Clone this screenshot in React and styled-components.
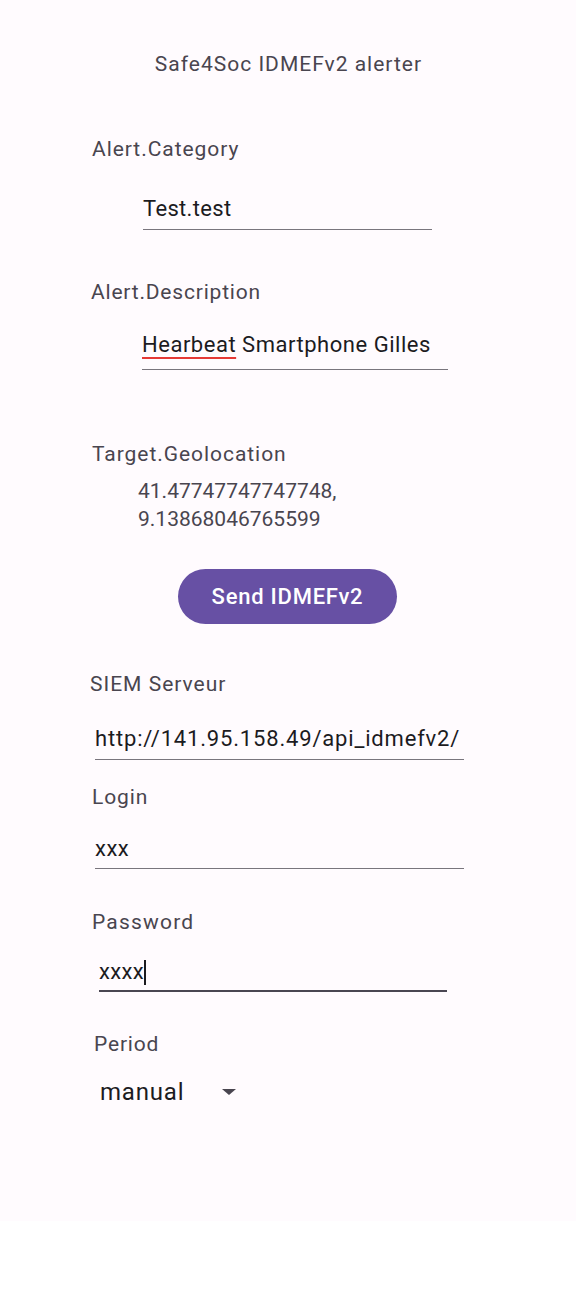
import React from "react";
import styled, { createGlobalStyle } from "styled-components";

const Global = createGlobalStyle`
  html, body { margin: 0; padding: 0; background: #ffffff; }
  body { font-family: Roboto, "Noto Sans", sans-serif; }
`;

const Screen = styled.div`
  width: 576px;
  height: 1221px;
  background: #fffbfe;
  display: flex;
  flex-direction: column;
  box-sizing: border-box;
  padding-top: 50px;
`;

const Title = styled.div`
  text-align: center;
  font-size: 21px;
  line-height: 28px;
  letter-spacing: 1px;
  color: #49454f;
  padding-left: 1px;
`;

const Label = styled.div`
  font-size: 21px;
  line-height: 28px;
  letter-spacing: ${(p) => p.$ls ?? 0.95}px;
  color: #49454f;
  margin-left: ${(p) => p.$x}px;
  margin-top: ${(p) => p.$top}px;
`;

const Field = styled.div`
  margin-left: ${(p) => p.$x}px;
  margin-top: ${(p) => p.$top}px;
  width: ${(p) => p.$w}px;
  border-bottom: ${(p) => (p.$focus ? "2px solid #4a4652" : "1.5px solid #79757d")};
  font-size: 22px;
  line-height: 30px;
  letter-spacing: ${(p) => p.$ls ?? 0.5}px;
  color: #1c1b1f;
  padding-bottom: ${(p) => p.$pb ?? 4}px;
  white-space: nowrap;
  display: flex;
  align-items: center;
`;

const Misspelled = styled.span`
  text-decoration: underline solid #e53935;
  text-decoration-thickness: 2px;
  text-underline-offset: 5px;
`;

const Caret = styled.span`
  display: inline-block;
  width: 2px;
  height: 25px;
  background: #1c1b1f;
  margin-left: 0px;
`;

const Coords = styled.div`
  margin-left: 138px;
  margin-top: 9px;
  font-size: 21px;
  line-height: 28px;
  color: #49454f;
`;

const ButtonRow = styled.div`
  display: flex;
  justify-content: center;
  margin-top: 36px;
  padding-right: 1px;
`;

const Button = styled.button`
  width: 219px;
  height: 55px;
  border: none;
  border-radius: 28px;
  background: #6750a4;
  color: #ffffff;
  font-family: Roboto, sans-serif;
  font-weight: 500;
  font-size: 22px;
  letter-spacing: 0.75px;
  padding: 0;
`;

const Select = styled.div`
  margin-left: 100px;
  margin-top: 19px;
  display: flex;
  align-items: center;
  font-size: 24px;
  line-height: 30px;
  letter-spacing: 0.8px;
  color: #1c1b1f;
`;

const Arrow = styled.span`
  width: 0;
  height: 0;
  border-left: 7px solid transparent;
  border-right: 7px solid transparent;
  border-top: 6px solid #49454f;
  margin-left: 38px;
  margin-top: -1px;
`;

export default function App() {
  return (
    <>
      <Global />
      <Screen>
        <Title>Safe4Soc IDMEFv2 alerter</Title>

        <Label $x={92} $top={57}>Alert.Category</Label>
        <Field $x={143} $top={31} $w={289} $ls={0.33} $pb={5}>Test.test</Field>

        <Label $x={91} $top={48} $ls={0.8}>Alert.Description</Label>
        <Field $x={142} $top={24} $w={306} $pb={9} $ls={0.52}>
          <Misspelled>Hearbeat</Misspelled>&nbsp;Smartphone Gilles
        </Field>

        <Label $x={92} $top={70}>Target.Geolocation</Label>
        <Coords>
          41.47747747747748,
          <br />
          9.13868046765599
        </Coords>

        <ButtonRow>
          <Button>Send IDMEFv2</Button>
        </ButtonRow>

        <Label $x={90} $top={46} $ls={1}>SIEM Serveur</Label>
        <Field $x={95} $top={26} $w={369} $pb={5} $ls={0.82}>http://141.95.158.49/api_idmefv2/</Field>

        <Label $x={92} $top={23} $ls={0.9}>Login</Label>
        <Field $x={95} $top={23} $w={369} $pb={4}>xxx</Field>

        <Label $x={92} $top={39} $ls={1.2}>Password</Label>
        <Field $x={99} $top={21} $w={348} $focus $pb={3} $ls={0.3}>
          xxxx<Caret />
        </Field>

        <Label $x={94} $top={38} $ls={0.83}>Period</Label>
        <Select>
          manual
          <Arrow />
        </Select>
      </Screen>
    </>
  );
}
